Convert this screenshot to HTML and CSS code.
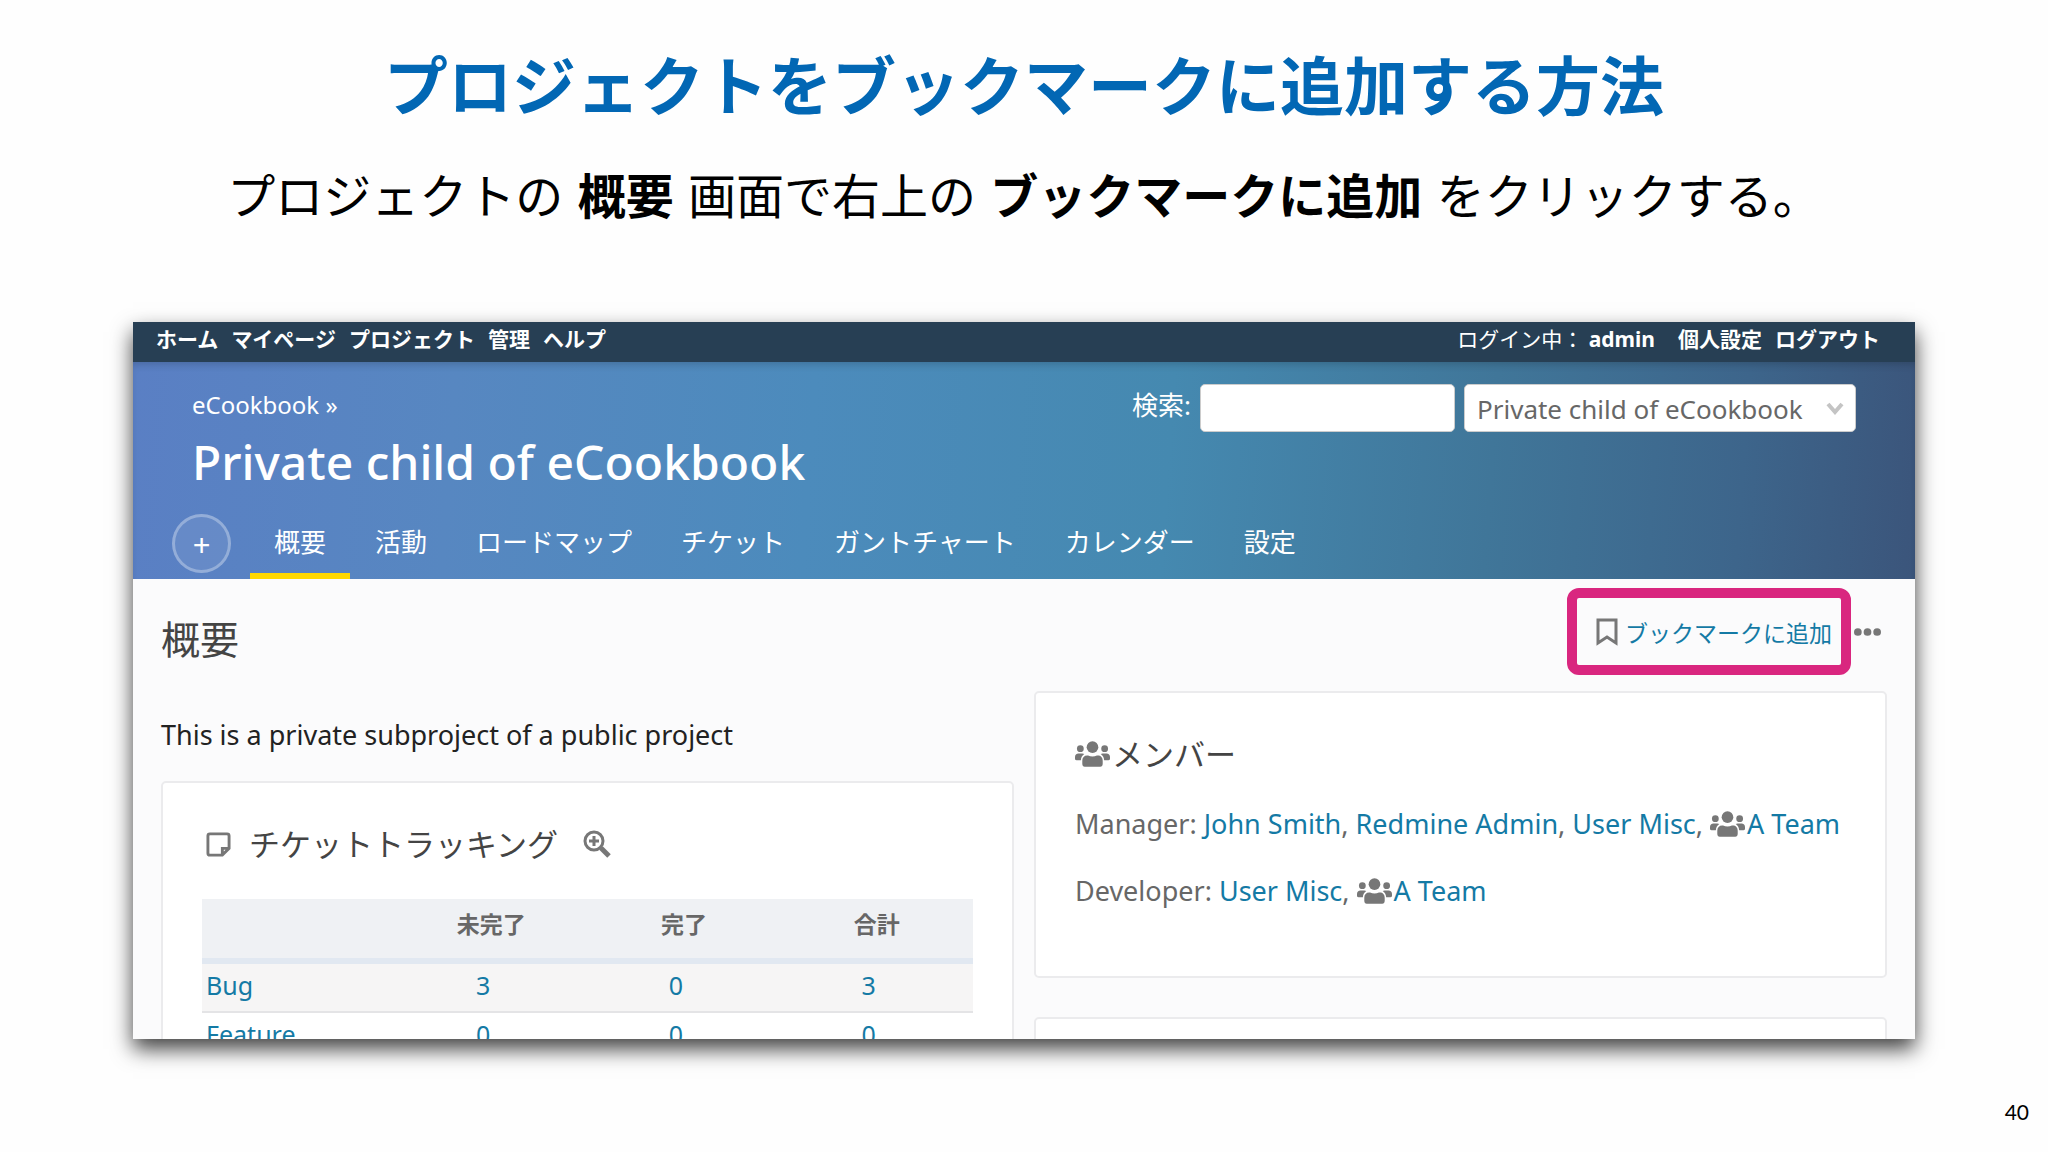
FILE: index.html
```html
<!DOCTYPE html>
<html lang="ja">
<head>
    <meta charset="UTF-8">
    <meta name="viewport" content="width=device-width, initial-scale=1.0">
    <title>プロジェクトをブックマークに追加する方法</title>
    <link rel="stylesheet" href="styles.css">
</head>
<body>
    <svg class="sprite" aria-hidden="true">
        <symbol id="icon-group" viewBox="0 0 36 26">
            <circle cx="18" cy="6" r="6"/>
            <circle cx="5.500" cy="7.500" r="3.500"/>
            <circle cx="30.500" cy="7.500" r="3.500"/>
            <path d="M7.500 23v-3c0-3.500 2-5.500 5-5.500h1c2.500 1.500 6.500 1.500 9 0h1c3 0 5 2 5 5.500v3c0 2-1 3-2.500 3h-16c-1.500 0-2.500-1-2.500-3z"/>
            <path d="M0 18v-2c0-2 1.500-3.500 3.500-3.500h4c.8 0 1.500.2 2 .6C7.500 14.500 6.200 16.500 6 19.500H1.500C.6 19.500 0 19 0 18z"/>
            <path d="M36 18v-2c0-2-1.500-3.500-3.500-3.500h-4c-.8 0-1.500.2-2 .6 2 1.400 3.300 3.400 3.500 6.400h4.500c.9 0 1.500-.5 1.500-1.500z"/>
        </symbol>
    </svg>

    <main class="slide">
        <h1>プロジェクトをブックマークに追加する方法</h1>
        <p class="lead">プロジェクトの <strong>概要</strong> 画面で右上の <strong>ブックマークに追加</strong> をクリックする。</p>

        <div class="window">
            <nav class="top-menu">
                <a href="#">ホーム</a>
                <a href="#">マイページ</a>
                <a href="#">プロジェクト</a>
                <a href="#">管理</a>
                <a href="#">ヘルプ</a>
                <div class="account">
                    <span class="logged-as">ログイン中： <a href="#">admin</a></span>
                    <a href="#">個人設定</a>
                    <a href="#">ログアウト</a>
                </div>
            </nav>

            <header class="header">
                <div class="header-row">
                    <div>
                        <a class="breadcrumb" href="#">eCookbook »</a>
                        <h2>Private child of eCookbook</h2>
                    </div>
                    <form class="search">
                        <label for="q">検索:</label>
                        <input type="text" id="q">
                        <div class="jump">
                            <select aria-label="プロジェクト">
                                <option>Private child of eCookbook</option>
                            </select>
                            <svg viewBox="0 0 20 14"><path d="M3 3l7 8 7-8"/></svg>
                        </div>
                    </form>
                </div>
                <nav class="main-menu">
                    <button class="add-btn" type="button">+</button>
                    <a class="selected" href="#">概要</a>
                    <a href="#">活動</a>
                    <a href="#">ロードマップ</a>
                    <a href="#">チケット</a>
                    <a href="#">ガントチャート</a>
                    <a href="#">カレンダー</a>
                    <a href="#">設定</a>
                </nav>
            </header>

            <div class="content">
                <div class="column">
                    <h3>概要</h3>
                    <p class="description">This is a private subproject of a public project</p>
                    <section class="box tracking">
                        <h4>
                            <svg class="icon-note" viewBox="0 0 26 26"><path d="M4 2h18q2 0 2 2v13l-7 7H4q-2 0-2-2V4q0-2 2-2zM17 24v-7h7"/></svg>
                            チケットトラッキング
                            <svg class="icon-zoom" viewBox="0 0 28 28"><circle cx="11" cy="11" r="9"/><path d="M11 6v10M6 11h10"/><path class="handle" d="M18 18l8 8"/></svg>
                        </h4>
                        <table>
                            <thead>
                                <tr><th></th><th>未完了</th><th>完了</th><th>合計</th></tr>
                            </thead>
                            <tbody>
                                <tr><td><a href="#">Bug</a></td><td><a href="#">3</a></td><td><a href="#">0</a></td><td><a href="#">3</a></td></tr>
                                <tr><td><a href="#">Feature</a></td><td><a href="#">0</a></td><td><a href="#">0</a></td><td><a href="#">0</a></td></tr>
                            </tbody>
                        </table>
                    </section>
                </div>

                <div class="column">
                    <div class="contextual">
                        <a class="bookmark" href="#">
                            <svg viewBox="0 0 22 28"><path d="M2 2h18v23l-9-6-9 6z"/></svg>
                            ブックマークに追加
                        </a>
                        <button class="more" type="button" aria-label="その他"><svg viewBox="0 0 28 8"><circle cx="4" cy="4" r="4"/><circle cx="14" cy="4" r="4"/><circle cx="24" cy="4" r="4"/></svg></button>
                    </div>
                    <section class="box members">
                        <h4><svg class="icon-group"><use href="#icon-group"/></svg>メンバー</h4>
                        <p>Manager: <a href="#">John Smith</a>, <a href="#">Redmine Admin</a>, <a href="#">User Misc</a>, <svg class="icon-group"><use href="#icon-group"/></svg><a href="#">A Team</a></p>
                        <p>Developer: <a href="#">User Misc</a>, <svg class="icon-group"><use href="#icon-group"/></svg><a href="#">A Team</a></p>
                    </section>
                    <section class="box"></section>
                </div>
            </div>
        </div>

        <footer class="page-number">40</footer>
    </main>
</body>
</html>
```
FILE: styles.css
```css
* {
    margin: 0;
    padding: 0;
    box-sizing: border-box;
}

body {
    font-family: 'Noto Sans', 'Noto Sans CJK JP', sans-serif;
    font-size: 26px;
    background: #fefefe;
    color: #676767;
}

a {
    color: #147aa5;
    text-decoration: none;
}

.sprite {
    display: none;
}

.slide {
    height: 100vh;
    display: flex;
    flex-direction: column;
}

h1 {
    padding-top: 35px;
    font-family: 'Noto Sans CJK JP', sans-serif;
    font-size: 64px;
    line-height: 94px;
    text-align: center;
    color: #0267b4;
}

.lead {
    margin-top: 34px;
    font-family: 'Liberation Sans', 'Noto Sans CJK JP', sans-serif;
    font-size: 48px;
    line-height: 70px;
    text-align: center;
    color: #000;
}

.lead strong {
    margin: 0 1px;
}

.window {
    flex: 1;
    margin: 89px 133px 0;
    display: flex;
    flex-direction: column;
    overflow: hidden;
    background: #fbfbfc;
    box-shadow: 0 10px 20px rgba(0, 0, 0, 0.75);
}

.top-menu {
    display: flex;
    flex-shrink: 0;
    gap: 13px;
    height: 40px;
    padding: 0 35px 0 23px;
    line-height: 34px;
    font-size: 21px;
    font-weight: bold;
    color: #fff;
    background: #273f54;
}

.top-menu a {
    color: #fff;
}

.account {
    display: flex;
    gap: 13px;
    margin-left: auto;
}

.logged-as {
    margin-right: 10px;
    font-weight: normal;
}

.logged-as a {
    font-weight: bold;
}

.header {
    height: 217px;
    display: flex;
    flex-direction: column;
    flex-shrink: 0;
    justify-content: space-between;
    color: #fff;
    background: linear-gradient(94deg, #5a7fc4 0%, #5787c1 18%, #4c8bbc 38%, #4589b0 58%, #407699 76%, #3d658b 90%, #3b557b 100%);
    box-shadow: inset 0 6px 8px -4px rgba(0, 0, 0, 0.2);
}

.header-row {
    display: flex;
    justify-content: space-between;
    padding: 22px 59px 0;
}

.breadcrumb {
    display: block;
    font-size: 24px;
    line-height: 42px;
    color: #fff;
}

h2 {
    font-size: 48px;
    font-weight: 500;
    line-height: 72px;
}

.search {
    display: flex;
    align-items: flex-start;
    gap: 9px;
}

.search label {
    line-height: 42px;
}

.search input,
.search select {
    height: 48px;
    border: 1px solid #ccc;
    border-radius: 5px;
    background: #fff;
    font: inherit;
    color: #676767;
}

.search input {
    width: 255px;
}

.search select {
    width: 392px;
    padding: 2px 12px 0;
    appearance: none;
}

.jump {
    position: relative;
}

.jump svg {
    position: absolute;
    right: 11px;
    top: 17px;
    width: 20px;
    height: 14px;
    fill: none;
    stroke: #c4c4c4;
    stroke-width: 4;
    pointer-events: none;
}

.main-menu {
    display: flex;
    align-items: flex-end;
    gap: 1px;
    padding-left: 39px;
}

.main-menu a {
    height: 70px;
    padding: 0 24px;
    border-bottom: 6px solid transparent;
    line-height: 66px;
    color: #fff;
}

.main-menu .selected {
    border-color: #ffd800;
}

.add-btn {
    width: 59px;
    height: 59px;
    margin: 0 18px 6px 0;
    border: 3px solid rgba(255, 255, 255, 0.3);
    border-radius: 50%;
    background: rgba(255, 255, 255, 0.08);
    font: inherit;
    font-size: 31px;
    line-height: 48px;
    color: #fff;
}

.content {
    display: grid;
    grid-template-columns: 1fr 1fr;
    gap: 20px;
    padding: 0 28px;
}

h3 {
    padding-top: 30px;
    font-size: 39px;
    font-weight: normal;
    line-height: 60px;
    color: #444;
}

.description {
    margin-top: 46px;
    font-size: 27px;
    line-height: 40px;
    color: #222;
}

.box {
    min-height: 100px;
    border: 2px solid #ebebed;
    border-radius: 5px;
    background: #fff;
}

.tracking {
    margin-top: 26px;
    padding: 38px 39px;
}

h4 {
    display: flex;
    align-items: center;
    font-size: 31px;
    font-weight: normal;
    line-height: 46px;
    color: #444;
}

.icon-note {
    width: 25px;
    height: 25px;
    margin: 0 18px 0 4px;
    fill: none;
    stroke: #777;
    stroke-width: 3;
}

.icon-zoom {
    width: 28px;
    height: 28px;
    margin-left: 25px;
    fill: none;
    stroke: #777;
    stroke-width: 3;
}

.icon-zoom .handle {
    stroke-width: 5;
}

table {
    width: 100%;
    margin-top: 32px;
    border-collapse: collapse;
    table-layout: fixed;
}

th {
    height: 62px;
    border-bottom: 6px solid #e1e8f1;
    font-size: 23px;
    line-height: 50px;
    vertical-align: top;
    background: #eff1f4;
}

td {
    height: 51px;
    padding-right: 16px;
    border-bottom: 2px solid #e4e4e6;
    font-size: 25px;
    line-height: 42px;
    text-align: center;
    vertical-align: top;
}

td:first-child {
    padding-left: 4px;
    text-align: left;
}

tbody tr:nth-child(odd) {
    background: #f6f5f5;
}

.contextual {
    display: flex;
    align-items: center;
    justify-content: flex-end;
    gap: 3px;
    margin: 9px 6px 0 0;
}

.bookmark {
    display: flex;
    align-items: center;
    gap: 7px;
    height: 87px;
    padding: 0 9px 0 19px;
    border: 10px solid #d9267f;
    border-radius: 12px;
    font-size: 23px;
}

.bookmark svg {
    width: 22px;
    height: 28px;
    fill: none;
    stroke: #777;
    stroke-width: 3;
}

.more {
    border: none;
    background: none;
}

.more svg {
    display: block;
    width: 27px;
    height: 8px;
    fill: #777;
}

.members {
    min-height: 287px;
    margin: 16px 0 39px;
    padding: 38px 39px;
}

.members p {
    margin-top: 27px;
    font-size: 27px;
    line-height: 40px;
    white-space: nowrap;
}

.icon-group {
    width: 35px;
    height: 26px;
    margin-right: 2px;
    vertical-align: -3px;
    fill: #777;
}

.page-number {
    height: 113px;
    padding: 60px 19px 0 0;
    font-family: Lato, sans-serif;
    font-size: 21px;
    line-height: 26px;
    text-align: right;
    color: #000;
}
```
